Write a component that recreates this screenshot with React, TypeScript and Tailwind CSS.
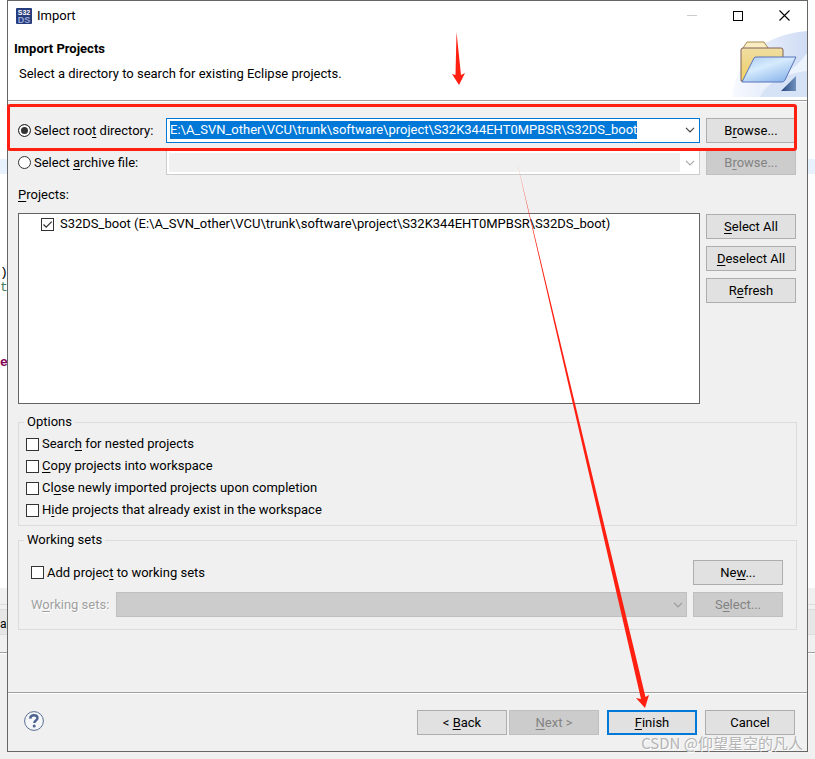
import { useEffect, useRef, type ReactNode } from "react";

const LINE = "text-[13px] leading-[18px]";

function Key({ children }: { children: ReactNode }) {
  return <span className="underline decoration-1 underline-offset-2">{children}</span>;
}

function PushButton({ children, disabled, primary }: { children: ReactNode; disabled?: boolean; primary?: boolean }) {
  const look = disabled
    ? "border border-[#bfbfbf] bg-[#cccccc] text-[#838383]"
    : primary
      ? "border-2 border-[#0078d7] bg-[#e1e1e1]"
      : "border border-[#adadad] bg-[#e1e1e1]";
  return (
    <button type="button" disabled={disabled} className={`flex h-[25px] w-[90px] shrink-0 items-center justify-center ${LINE} ${look}`}>
      <span>{children}</span>
    </button>
  );
}

function Chevron({ color }: { color: string }) {
  return (
    <svg width="10" height="6" viewBox="0 0 10 6" fill="none" stroke={color} strokeWidth="1.2" aria-hidden="true">
      <path d="M1 0.8 5 4.8 9 0.8" />
    </svg>
  );
}

function CheckMark() {
  return (
    <svg className="pointer-events-none absolute inset-0" width="13" height="13" viewBox="0 0 13 13" fill="none" stroke="#333" strokeWidth="1.3" aria-hidden="true">
      <path d="M2.5 6.5 5.2 9.2 10.7 3.6" />
    </svg>
  );
}

function Check({ children, checked }: { children: ReactNode; checked?: boolean }) {
  return (
    <label className={`flex h-[22px] items-center gap-[3px] ${LINE}`}>
      <span className="relative flex h-[13px] w-[13px] shrink-0">
        <input type="checkbox" defaultChecked={checked} className="h-[13px] w-[13px] appearance-none border border-[#333] bg-white" />
        {checked && <CheckMark />}
      </span>
      <span>{children}</span>
    </label>
  );
}

function Radio({ children, checked, id }: { children: ReactNode; checked?: boolean; id: string }) {
  return (
    <label htmlFor={id} className={`flex w-[142px] shrink-0 items-center gap-[3px] whitespace-nowrap ${LINE}`}>
      <input
        id={id}
        type="radio"
        name="source"
        defaultChecked={checked}
        className="h-[13px] w-[13px] shrink-0 appearance-none rounded-full border border-[#333] bg-white checked:bg-[#333] checked:shadow-[inset_0_0_0_2px_white]"
      />
      <span>{children}</span>
    </label>
  );
}

function LeftBackdrop() {
  return (
    <div className="flex w-[7px] shrink-0 flex-col overflow-hidden whitespace-nowrap font-['Liberation_Mono',monospace] text-[13px] leading-[15px]">
      <div className="h-[588px] bg-white">
        <div className="h-[159px]" />
        <div className="h-[15px] bg-[#e8f2fe]" />
        <div className="h-[91px]" />
        <div>)</div>
        <div className="text-[#3f7f5f]">t</div>
        <div className="h-[60px]" />
        <div className="font-bold text-[#7f0055]">ec</div>
      </div>
      <div className="h-[17px] border-b border-[#dcdcdc] bg-[#f0f0f0]" />
      <div className="h-[4px] bg-[#f0f0f0]" />
      <div className="h-[26px] border-y border-[#dcdcdc] bg-[#e6e6e6] font-['Roboto',sans-serif] text-xs leading-[28px]">al</div>
      <div className="h-[18px] border-b border-[#a0a0a0] bg-[#f0f0f0]" />
      <div className="grow border-t border-white bg-[#f0f0f0]" />
    </div>
  );
}

function RightBackdrop() {
  return (
    <div className="flex w-[7px] shrink-0 flex-col">
      <div className="h-[588px] bg-white">
        <div className="h-[159px]" />
        <div className="h-[15px] bg-[#e8f2fe]" />
      </div>
      <div className="h-[17px] border-b border-[#dcdcdc] bg-[#f0f0f0]" />
      <div className="h-[4px] bg-[#f0f0f0]" />
      <div className="h-[26px] border-y border-[#dcdcdc] bg-[#e6e6e6]" />
      <div className="h-[18px] border-b border-[#a0a0a0] bg-[#f0f0f0]" />
      <div className="grow border-t border-white bg-[#f0f0f0]" />
    </div>
  );
}

function AppIcon() {
  return (
    <svg width="16" height="16" viewBox="0 0 16 16" aria-hidden="true">
      <rect width="16" height="16" rx="1" fill="#273c7c" />
      <text x="8" y="7" textAnchor="middle" fontFamily="Liberation Sans, sans-serif" fontWeight="bold" fontSize="7" fill="#fff">S32</text>
      <text x="8" y="15" textAnchor="middle" fontFamily="Liberation Sans, sans-serif" fontWeight="bold" fontSize="9" fill="#9aa9d8">DS</text>
    </svg>
  );
}

function FolderArt() {
  return (
    <svg width="75" height="67" viewBox="0 0 75 67" aria-hidden="true">
      <defs>
        <linearGradient id="sweep" x1="0" x2="1"><stop offset="0" stopColor="#f8faff" /><stop offset="1" stopColor="#cfdcf4" /></linearGradient>
        <linearGradient id="back" x1="0" y1="0" x2="0" y2="1"><stop offset="0" stopColor="#f0dfa4" /><stop offset="0.5" stopColor="#efd583" /><stop offset="1" stopColor="#f3d45c" /></linearGradient>
        <linearGradient id="front" x1="0" y1="0" x2="0.7" y2="1"><stop offset="0" stopColor="#a9cbf3" /><stop offset="0.45" stopColor="#d6ebfd" /><stop offset="1" stopColor="#8fb8ec" /></linearGradient>
        <linearGradient id="corner" x1="0" x2="1"><stop offset="0" stopColor="#28457f" /><stop offset="1" stopColor="#7193bd" /></linearGradient>
      </defs>
      <path d="M0 66C4 28 30 4 75 0V66Z" fill="url(#sweep)" />
      <path d="M28 66C38 49 54 42 75 40V66Z" fill="#d6e2f6" />
      <path d="M28 52C48 48 64 38 75 22V40C57 42 42 49 28 60Z" fill="#edf3fd" />
      <path d="M11 17 15 11H32L36 17V24H11Z" fill="#f9edc1" stroke="#a78d54" />
      <path d="M9 50V19Q9 17 11 17H49Q51 17 51 19V50Z" fill="url(#back)" stroke="#80615b" />
      <path d="M10 51 22 27Q23 26 24 26H64L53 49Q52 51 50 51Z" fill="url(#front)" stroke="#5874b8" />
      <path d="M64 45V60H49Z" fill="url(#corner)" />
    </svg>
  );
}

export default function App() {
  const root = useRef<HTMLInputElement>(null);
  useEffect(() => {
    root.current?.focus({ preventScroll: true });
    root.current?.select();
  }, []);

  return (
    <div className="relative flex min-h-screen flex-col overflow-hidden bg-[#f0f0f0] font-['Roboto','Noto_Sans_CJK_SC',sans-serif] text-black">
      <div className="flex grow">
        <LeftBackdrop />
        <main className="flex min-w-0 grow flex-col border border-[#666] bg-[#f0f0f0]">
          <header className="border-b border-[#a0a0a0] bg-white">
            <div className="flex h-[30px] items-center pl-2 pb-px">
              <AppIcon />
              <h1 className={`ml-[5px] grow ${LINE}`}>Import</h1>
              <button type="button" aria-label="Minimize" disabled className="flex h-[28px] w-[46px] items-center justify-center">
                <span className="h-px w-[10px] bg-[#ccc]" />
              </button>
              <button type="button" aria-label="Maximize" className="flex h-[28px] w-[46px] items-center justify-center">
                <span className="h-[10px] w-[10px] border border-black" />
              </button>
              <button type="button" aria-label="Close" className="flex h-[28px] w-[46px] items-center justify-center">
                <svg width="11" height="11" viewBox="0 0 11 11" stroke="#000" strokeWidth="1.1"><path d="M.5.5 10.5 10.5M10.5.5.5 10.5" /></svg>
              </button>
            </div>
            <div className="flex h-[69px] justify-between">
              <div className="pl-1.5 pt-[9px]">
                <h2 className={`font-bold ${LINE}`}>Import Projects</h2>
                <p className={`pl-[5px] pt-[7px] ${LINE}`}>Select a directory to search for existing Eclipse projects.</p>
              </div>
              <FolderArt />
            </div>
          </header>

          <form className="flex grow flex-col border-t border-white">
            <div className="flex grow flex-col px-[10px] pt-4">
              <div className="relative flex items-center pr-px">
                <Radio id="from-root" checked>Select roo<Key>t</Key> directory:</Radio>
                <div className="ml-1.5 mr-1.5 flex h-[25px] min-w-0 grow items-center border border-[#0078d7] bg-white pb-0.5 pl-[3px] pr-1">
                  <input
                    ref={root}
                    aria-label="Root directory"
                    defaultValue="E:\A_SVN_other\VCU\trunk\software\project\S32K344EHT0MPBSR\S32DS_boot"
                    className={`min-w-0 grow bg-transparent outline-none selection:bg-[#0078d7] selection:text-white ${LINE}`}
                  />
                  <button type="button" aria-label="Recent directories"><Chevron color="#444" /></button>
                </div>
                <PushButton>B<Key>r</Key>owse...</PushButton>
                <div className="pointer-events-none absolute -bottom-2 -left-[11px] -top-[14px] right-0 rounded-[3px] border-3 border-[#ff2012]" />
              </div>
              <div className="mt-[7px] flex items-center pr-px">
                <Radio id="from-archive">Select <Key>a</Key>rchive file:</Radio>
                <div className="ml-1.5 mr-1.5 flex h-[25px] min-w-0 grow items-center border border-[#ccc] bg-white py-0.5 pl-0.5 pr-1">
                  <input aria-label="Archive file" disabled className="mr-[5px] h-full min-w-0 grow bg-[#f0f0f0]" />
                  <button type="button" aria-label="Recent archives" disabled><Chevron color="#aaa" /></button>
                </div>
                <PushButton disabled>B<Key>r</Key>owse...</PushButton>
              </div>

              <h3 className={`mt-[11px] ${LINE}`}><Key>P</Key>rojects:</h3>
              <div className="mt-[9px] flex gap-1.5 pr-px">
                <div className="h-[191px] min-w-0 grow border border-[#646464] bg-white pl-[22px]">
                  <label className={`flex h-5 items-center gap-1.5 ${LINE}`}>
                    <span className="relative flex h-[13px] w-[13px] shrink-0">
                      <input type="checkbox" defaultChecked className="h-[13px] w-[13px] appearance-none border border-[#333] bg-white" />
                      <CheckMark />
                    </span>
                    <span className="whitespace-nowrap">S32DS_boot (E:\A_SVN_other\VCU\trunk\software\project\S32K344EHT0MPBSR\S32DS_boot)</span>
                  </label>
                </div>
                <div className="flex flex-col gap-[7px] pt-px">
                  <PushButton><Key>S</Key>elect All</PushButton>
                  <PushButton><Key>D</Key>eselect All</PushButton>
                  <PushButton>R<Key>e</Key>fresh</PushButton>
                </div>
              </div>

              <fieldset className="mt-[9px] border border-[#dcdcdc] pb-1 pl-[7px] pt-0.5">
                <legend className={`-ml-0.5 px-[3px] ${LINE}`}>Options</legend>
                <Check>Searc<Key>h</Key> for nested projects</Check>
                <Check><Key>C</Key>opy projects into workspace</Check>
                <Check>Cl<Key>o</Key>se newly imported projects upon completion</Check>
                <Check>H<Key>i</Key>de projects that already exist in the workspace</Check>
              </fieldset>

              <fieldset className="mt-[5px] border border-[#dcdcdc] pb-3 pl-3 pr-[13px]">
                <legend className={`-ml-[7px] px-[3px] ${LINE}`}>Working sets</legend>
                <div className="mt-[11px] flex items-center justify-between">
                  <Check>Add projec<Key>t</Key> to working sets</Check>
                  <PushButton>Ne<Key>w</Key>...</PushButton>
                </div>
                <div className="mt-[7px] flex items-center">
                  <label htmlFor="sets" className={`w-[85px] shrink-0 whitespace-nowrap text-[#a0a0a0] text-shadow-[1px_1px_0_white] ${LINE}`}>W<Key>o</Key>rking sets:</label>
                  <div className="relative mr-1.5 min-w-0 grow">
                    <select id="sets" disabled className="block h-[25px] w-full appearance-none border border-[#bfbfbf] bg-[#ccc] opacity-100" />
                    <span className="pointer-events-none absolute inset-y-0 right-1 flex items-center"><Chevron color="#999" /></span>
                  </div>
                  <PushButton disabled>S<Key>e</Key>lect...</PushButton>
                </div>
              </fieldset>
            </div>

            <footer className="border-t border-[#a0a0a0]">
              <div className="flex h-[58px] items-center border-t border-white pl-4 pr-3">
                <button type="button" aria-label="Help" className="pb-1">
                  <svg width="20" height="20" viewBox="0 0 20 20" fill="none" aria-hidden="true">
                    <circle cx="10" cy="10" r="9.4" fill="#f4f6f9" stroke="#596d91" />
                    <path d="M6.200 7.600C6.300 5.200 7.800 4.200 10 4.200c2.200 0 3.500 1.100 3.500 2.800 0 2.400-3.200 2.600-3.200 5" stroke="#4d638d" strokeWidth="2.400" />
                    <circle cx="10.200" cy="15" r="1.500" fill="#4d638d" />
                  </svg>
                </button>
                <div className="ml-auto flex gap-2">
                  <div className="flex gap-0.5">
                    <PushButton>&lt; <Key>B</Key>ack</PushButton>
                    <PushButton disabled><Key>N</Key>ext &gt;</PushButton>
                  </div>
                  <PushButton primary><Key>F</Key>inish</PushButton>
                  <PushButton>Cancel</PushButton>
                </div>
              </div>
            </footer>
          </form>
        </main>
        <RightBackdrop />
      </div>
      <div className="h-[7px] shrink-0" />

      <svg className="pointer-events-none absolute left-0 top-0" width="815" height="759" viewBox="0 0 815 759" aria-hidden="true">
        <path d="M456.500 32 461 75 465 73 459 85 452 74 455.500 75Z" fill="#ff2012" />
        <path d="M517 162 645.500 697 649 695 645 708 636 698 641 699Z" fill="#ff2012" />
      </svg>
      <div className="pointer-events-none absolute bottom-[5px] right-[12px] whitespace-nowrap font-['Noto_Sans_CJK_SC',sans-serif] text-[15px] leading-[22px] text-[#b4b4b4] text-shadow-[1px_1px_0_white]">
        CSDN @仰望星空的凡人
      </div>
    </div>
  );
}
